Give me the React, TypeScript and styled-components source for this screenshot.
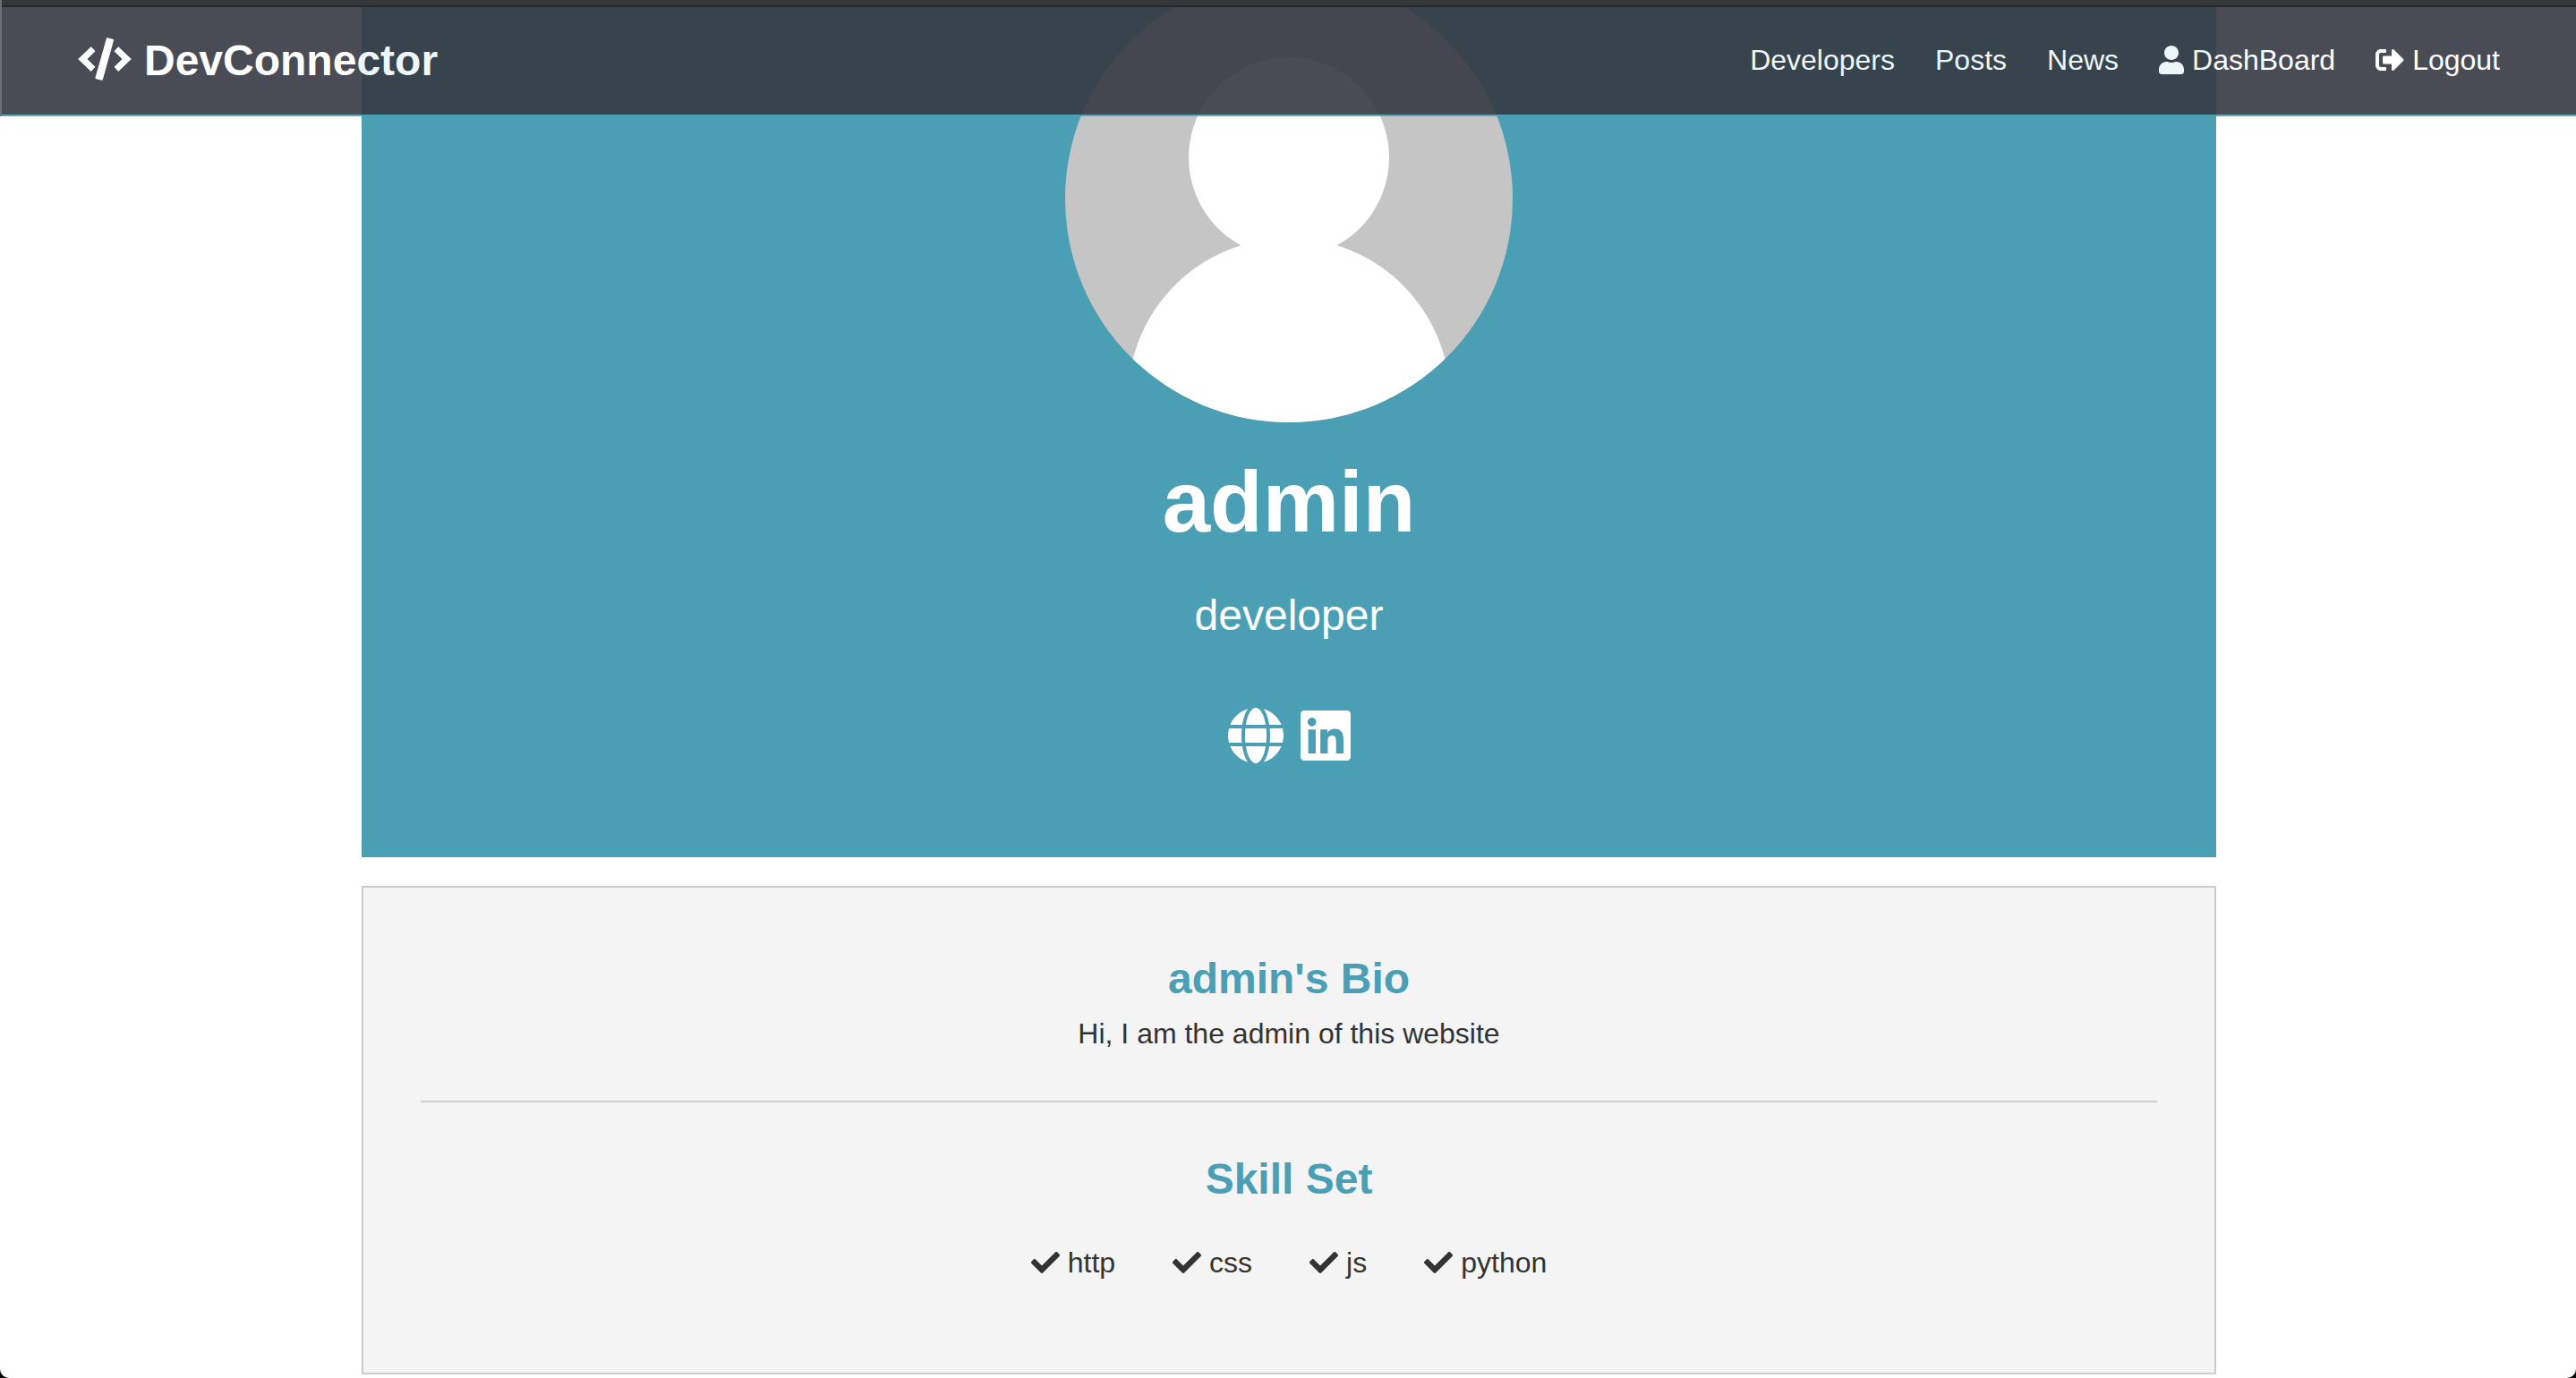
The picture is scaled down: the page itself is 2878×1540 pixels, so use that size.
import React from "react";
import styled, { createGlobalStyle } from "styled-components";
import { FaCheck, FaGlobe, FaLinkedin, FaSignOutAlt, FaUser } from "react-icons/fa";

const primary = "#4b9fb5";
const dark = "#363942";

const GlobalStyle = createGlobalStyle`
  * { box-sizing: border-box; margin: 0; padding: 0; }
  html { background: #000; }
  body {
    font-family: "Liberation Sans", Arial, Helvetica, sans-serif;
    font-size: 32px;
    line-height: 46px;
    color: #333;
  }
  a { color: inherit; text-decoration: none; }
  ul { list-style: none; }
  svg { display: block; flex: none; }
`;

const Window = styled.div`
  min-height: 100vh;
  overflow: hidden;
  background: #fff;
  border-left: 2px solid #fff;
  border-radius: 0 0 10px 10px;
`;

const Header = styled.header`
  position: fixed;
  top: 0;
  left: 0;
  right: 0;
  z-index: 1;
  border-left: 2px solid #6d6f74;
`;

const WindowEdge = styled.div`
  height: 8px;
  background: #36373b;
  border-bottom: 2px solid #28282a;
`;

const Navbar = styled.nav`
  display: flex;
  justify-content: space-between;
  align-items: center;
  height: 122px;
  padding: 0 85px;
  background: ${dark};
  border-bottom: 2px solid ${primary};
  color: #fff;
  opacity: 0.9;
`;

const Logo = styled.h1`
  font-size: 48px;
  line-height: 76px;
`;

const IconLink = styled.a<{ $gap: number }>`
  display: flex;
  align-items: center;
  gap: ${({ $gap }) => $gap}px;
`;

const CodeIcon = styled.svg`
  width: 60px;
  height: 52px;
  fill: currentColor;
  stroke: currentColor;
  stroke-width: 1;
  stroke-linejoin: round;
`;

const UserIcon = styled(FaUser)`
  width: 28px;
`;

const GlobeIcon = styled(FaGlobe)`
  width: 62px;
`;

const LinkedinIcon = styled(FaLinkedin)`
  width: 56px;
`;

const NavList = styled.ul`
  display: flex;
  gap: 45px;
  padding-bottom: 2px;
`;

const Main = styled.main`
  max-width: 2200px;
  margin: -60px auto 0;
  padding: 0 64px 4px;
`;

const Hero = styled.section`
  display: flex;
  flex-direction: column;
  align-items: center;
  padding: 32px;
  margin-bottom: 32px;
  background: ${primary};
  color: #fff;
`;

const Avatar = styled.svg`
  width: 500px;
  height: 500px;
  border-radius: 50%;
  margin-bottom: 32px;
`;

const Name = styled.h2`
  font-size: 96px;
  line-height: 114px;
  margin-bottom: 32px;
`;

const Lead = styled.p`
  font-size: 48px;
  line-height: 76px;
`;

const Social = styled.div`
  display: flex;
  gap: 19px;
  padding: 64px 0 72px;
  font-size: 64px;
`;

const About = styled.section`
  padding: 64px;
  background: #f4f4f4;
  border: 2px solid #ccc;
  text-align: center;
`;

const Heading = styled.h3`
  font-size: 48px;
  line-height: 76px;
  color: ${primary};
`;

const Line = styled.hr`
  height: 2px;
  margin: 52px 0 48px;
  border: 0;
  background: #ccc;
`;

const Skills = styled.ul`
  display: flex;
  flex-wrap: wrap;
  justify-content: center;
  gap: 64px;
  padding: 32px 0 36px;
`;

const Skill = styled.li`
  display: flex;
  align-items: center;
  gap: 9px;
`;

const skills = ["http", "css", "js", "python"];

export default function App() {
  return (
    <Window>
      <GlobalStyle />
      <Header>
        <WindowEdge />
        <Navbar>
          <Logo>
            <IconLink href="#" $gap={14}>
              <CodeIcon viewBox="0 0 60 52" aria-hidden="true">
                <path d="M.7 24 14.8 10.7 19 15.3 10 24l9 8.8-4.2 4.6z" />
                <path d="M59.3 24 45.2 10.7 41 15.3 50 24l-9 8.8 4.2 4.6z" />
                <path d="m32.5.6 7.2 1.8L27.2 47.4l-7.4-1.9z" />
              </CodeIcon>
              DevConnector
            </IconLink>
          </Logo>
          <NavList>
            <li><a href="#developers">Developers</a></li>
            <li><a href="#posts">Posts</a></li>
            <li><a href="#news">News</a></li>
            <li><IconLink href="#dashboard" $gap={9}><UserIcon />DashBoard</IconLink></li>
            <li><IconLink href="#logout" $gap={9}><FaSignOutAlt />Logout</IconLink></li>
          </NavList>
        </Navbar>
      </Header>
      <Main>
        <Hero>
          <Avatar viewBox="0 0 500 500" role="img" aria-label="admin">
            <rect width="500" height="500" fill="#c5c5c5" />
            <circle cx="250" cy="204" r="112" fill="#fff" />
            <circle cx="250" cy="474" r="180" fill="#fff" />
          </Avatar>
          <Name>admin</Name>
          <Lead>developer</Lead>
          <Social>
            <a href="#website" aria-label="Website"><GlobeIcon /></a>
            <a href="#linkedin" aria-label="LinkedIn"><LinkedinIcon /></a>
          </Social>
        </Hero>
        <About>
          <Heading>admin's Bio</Heading>
          <p>Hi, I am the admin of this website</p>
          <Line />
          <Heading>Skill Set</Heading>
          <Skills>
            {skills.map((skill) => (
              <Skill key={skill}><FaCheck />{skill}</Skill>
            ))}
          </Skills>
        </About>
      </Main>
    </Window>
  );
}
